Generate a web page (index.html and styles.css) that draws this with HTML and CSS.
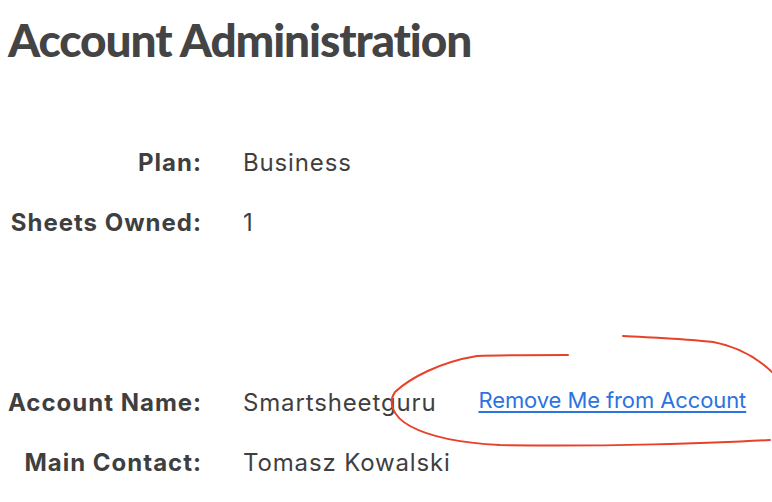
FILE: index.html
```html
<!DOCTYPE html>
<html lang="en">
<head>
<meta charset="utf-8">
<title>Account Administration</title>
<link rel="stylesheet" href="styles.css">
</head>
<body>
<main class="page">
  <h1 class="title">Account Administration</h1>
  <dl class="info info-top">
    <dt class="label">Plan:</dt>
    <dd class="value">Business</dd>
    <dt class="label">Sheets Owned:</dt>
    <dd class="value">1</dd>
  </dl>
  <dl class="info info-bottom">
    <dt class="label">Account Name:</dt>
    <dd class="value value-row"><span>Smartsheetguru</span><a class="link" href="#">Remove Me from Account</a></dd>
    <dt class="label">Main Contact:</dt>
    <dd class="value">Tomasz Kowalski</dd>
  </dl>
  <svg class="scribble" width="772" height="502" viewBox="0 0 772 502" aria-hidden="true">
    <path d="M568 355 C540 355 500 355 477 356 C440 362 410 378 395 392 C388 402 392 416 410 426 C430 437 460 443 500 445 C600 447 720 443 770 440" />
    <path d="M623 336 C660 338 690 339 713 342 C735 346 755 356 772 372" />
  </svg>
</main>
</body>
</html>
```
FILE: styles.css
```css
html, body {
  margin: 0;
  padding: 0;
  background: #ffffff;
}

.page {
  position: relative;
  width: 772px;
  height: 502px;
  overflow: hidden;
  padding-left: 8px;
  box-sizing: border-box;
  color: #3f3f3f;
  font-family: "Inter", "Liberation Sans", sans-serif;
}

.title {
  margin: 0;
  padding-top: 12px;
  font-family: "Lato", "Liberation Sans", sans-serif;
  font-weight: 900;
  font-size: 46px;
  line-height: 56px;
  letter-spacing: -1.1px;
  color: #444444;
}

.info {
  display: grid;
  grid-template-columns: 194px auto;
  column-gap: 41px;
  grid-auto-rows: 60px;
  margin: 0;
  font-size: 24px;
  line-height: 30px;
}

.info-top {
  margin-top: 80px;
}

.info-bottom {
  margin-top: 120px;
}

.label {
  text-align: right;
  white-space: nowrap;
  font-weight: 700;
  letter-spacing: 1px;
  color: #3f3f3f;
}

.value {
  margin: 0;
  white-space: nowrap;
  font-weight: 400;
  letter-spacing: 0.85px;
  color: #3f3f3f;
}

.value-row {
  display: flex;
  gap: 42px;
  align-items: baseline;
}

.link {
  font-size: 22px;
  letter-spacing: -0.1px;
  color: #2a73e0;
  text-decoration: underline;
  text-underline-offset: 3px;
  position: relative;
  top: -3px;
}

.scribble {
  position: absolute;
  left: 0;
  top: 0;
  pointer-events: none;
}

.scribble path {
  fill: none;
  stroke: #e8412a;
  stroke-width: 2;
  stroke-linecap: round;
}
```
